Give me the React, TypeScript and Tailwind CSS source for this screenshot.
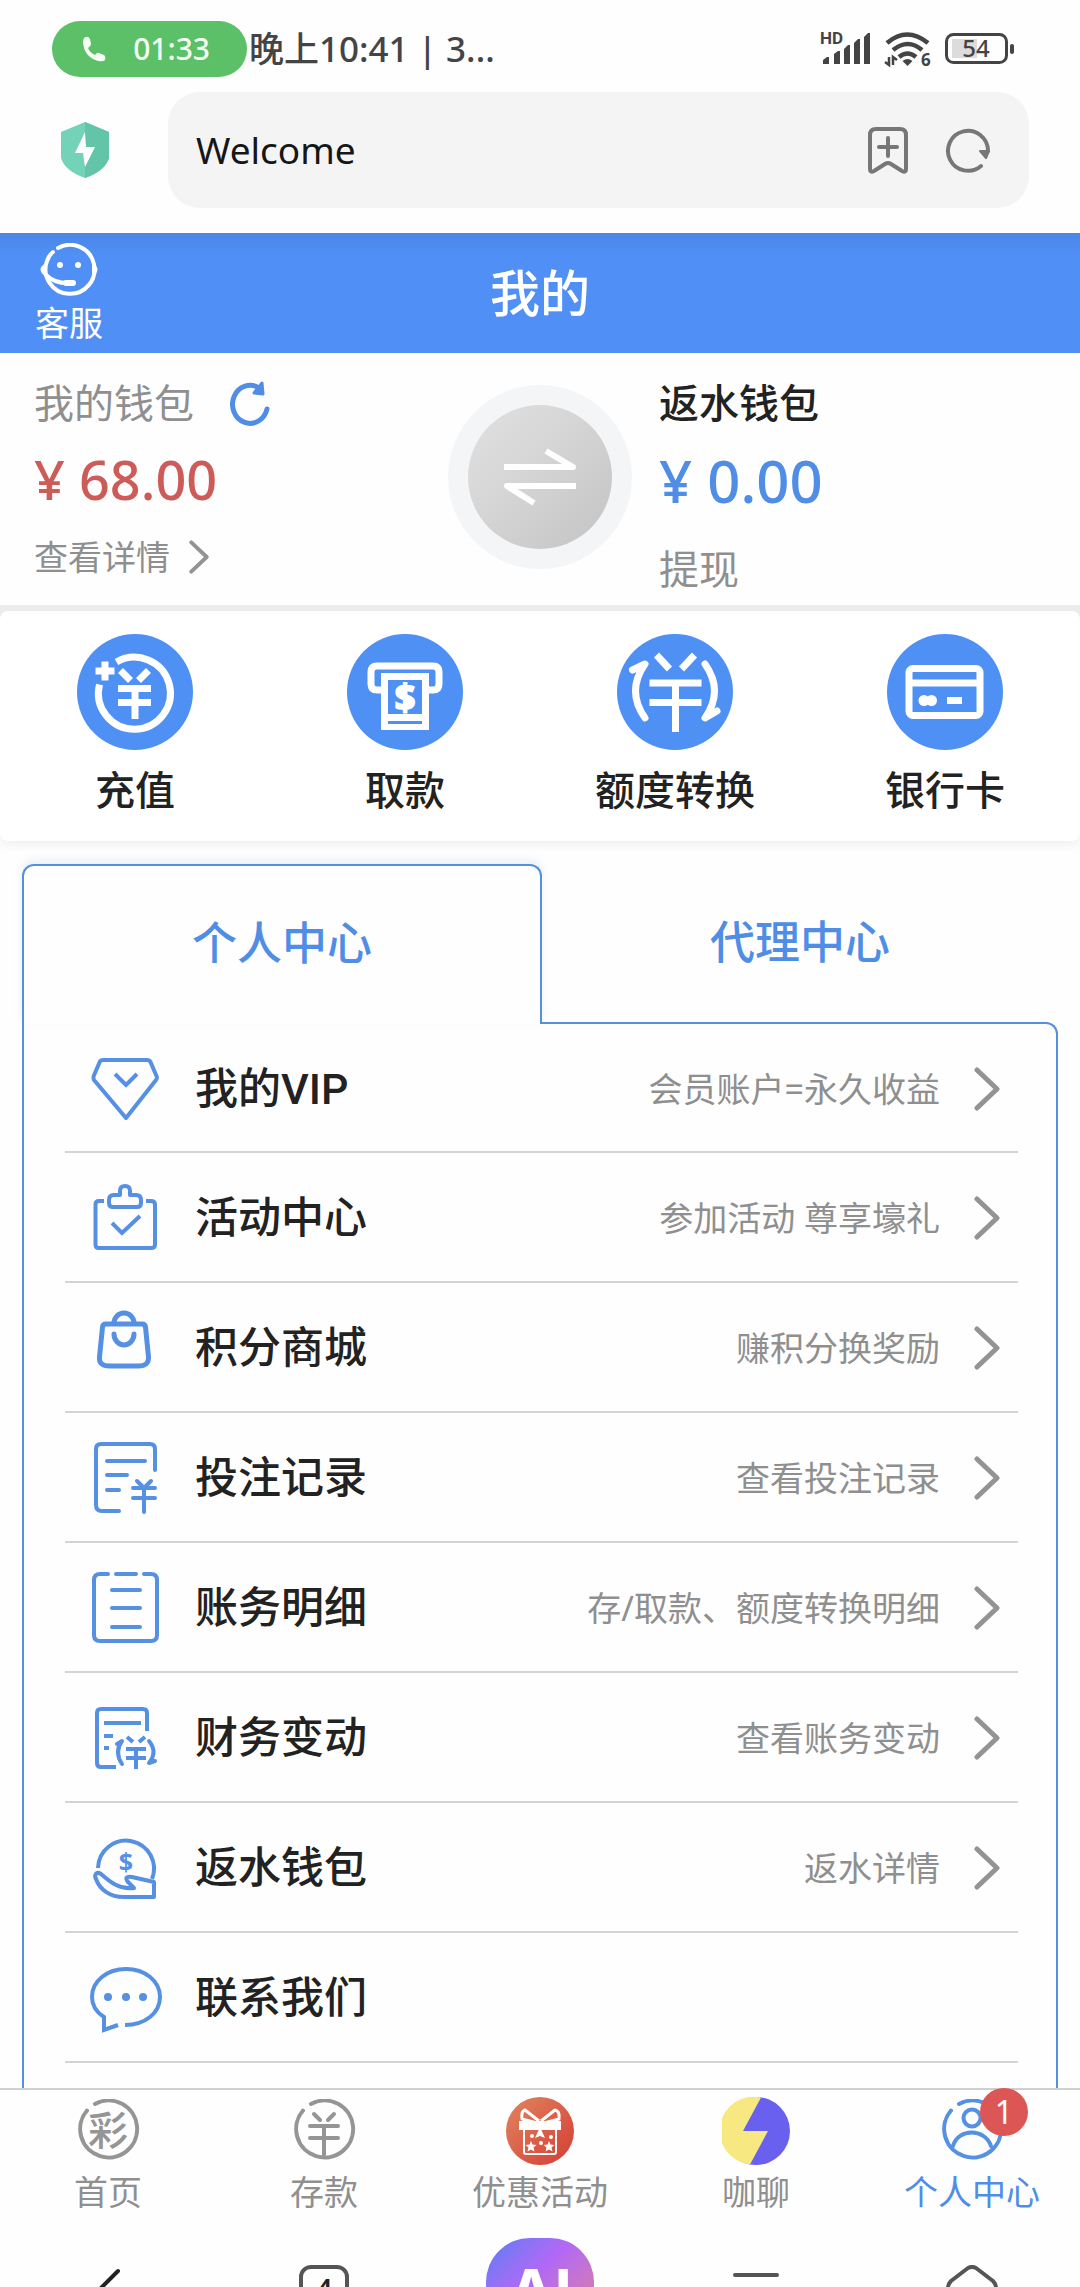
import { useState } from "react";
import type { ReactNode } from "react";

interface MenuItem {
  label: string;
  desc?: string;
  icon: ReactNode;
}

interface QuickAction {
  label: string;
  icon: ReactNode;
}

// 列表图标外框
const LineIcon = ({ children, width = 4 }: { children: ReactNode; width?: number }) => (
  <svg
    viewBox="0 0 76 76"
    className="size-[76px] shrink-0"
    fill="none"
    stroke="#5590e3"
    strokeWidth={width}
    strokeLinecap="round"
    strokeLinejoin="round"
    aria-hidden="true"
  >
    {children}
  </svg>
);

// 圆形快捷图标外框
const RoundIcon = ({ children }: { children: ReactNode }) => (
  <svg
    viewBox="0 0 116 116"
    className="size-[116px]"
    fill="none"
    stroke="#fff"
    strokeWidth="7"
    aria-hidden="true"
  >
    <circle cx="58" cy="58" r="58" fill="#4f90f4" stroke="none" />
    {children}
  </svg>
);

const Chevron = ({ className }: { className: string }) => (
  <svg
    viewBox="0 0 26 44"
    className={className}
    fill="none"
    stroke="#939393"
    strokeWidth="5"
    strokeLinecap="round"
    strokeLinejoin="round"
    aria-hidden="true"
  >
    <path d="M3 3l20 19L3 41" />
  </svg>
);

const quickActions: QuickAction[] = [
  {
    label: "充值",
    icon: (
      <RoundIcon>
        <path d="M39.5 28A36 36 0 1 1 22.5 50.5" />
        <path d="M18.5 37h19M28 27.5v19" />
        <path d="M43.5 36.5l10 10M71.5 36.5l-10 10M41 54.5h33M41 68.5h33M58 54.5V85" />
      </RoundIcon>
    ),
  },
  {
    label: "取款",
    icon: (
      <RoundIcon>
        <path d="M34 56h-4q-6 0-6-6V38q0-6 6-6h56q6 0 6 6v12q0 6-6 6h-4" />
        <path d="M34 39h48v57H34z" fill="#fff" stroke="none" />
        <path d="M41 46h34v34H41zM41 87h34v3H41z" fill="#4f90f4" stroke="none" />
        <text
          x="58"
          y="76"
          textAnchor="middle"
          fill="#fff"
          stroke="#fff"
          strokeWidth="2"
          className="font-['Noto_Sans',sans-serif] text-[36px] font-bold"
        >
          $
        </text>
      </RoundIcon>
    ),
  },
  {
    label: "额度转换",
    icon: (
      <RoundIcon>
        <path d="M28 84Q9 57 28 30L15.5 36" strokeLinecap="round" strokeLinejoin="round" />
        <path d="M88 30Q107 57 88 84L100 77" strokeLinecap="round" strokeLinejoin="round" />
        <path d="M39.5 21l13 14M77.5 21l-13 14M32.5 49h52M32.5 68.5h52M58.5 49v49" />
      </RoundIcon>
    ),
  },
  {
    label: "银行卡",
    icon: (
      <RoundIcon>
        <rect x="22" y="34.5" width="71" height="47" rx="4" />
        <path d="M22 49h71M60 66.5h15" />
        <circle cx="37" cy="66.5" r="5.5" fill="#fff" stroke="none" />
        <circle cx="44.5" cy="66.5" r="5.5" fill="#fff" stroke="none" />
      </RoundIcon>
    ),
  },
];

const menuItems: MenuItem[] = [
  {
    label: "我的VIP",
    desc: "会员账户=永久收益",
    icon: (
      <LineIcon>
        <path d="M18 9h42q2.5 0 3.5 2l6 14q1 2-.5 4L39 67 7 29q-1-2-.3-4l6-14q1-2 3.3-2z" />
        <path d="M28 23l11 11 11-11" strokeLinecap="butt" strokeLinejoin="miter" />
      </LineIcon>
    ),
  },
  {
    label: "活动中心",
    desc: "参加活动 尊享壕礼",
    icon: (
      <LineIcon>
        <path d="M17 21h-5q-3.5 0-3.5 3.5v40q0 3.5 3.5 3.5h52q4 0 4-3.5v-40q0-3.5-4-3.5h-5" strokeLinecap="butt" />
        <path d="M33 15v-4q0-5 5-5t5 5v4h6q5 0 5 5v3q0 4-4 4H26q-4 0-4-4v-3q0-5 5-5z" />
        <path d="M25 43l10 10 18-17" strokeLinecap="butt" strokeLinejoin="miter" />
      </LineIcon>
    ),
  },
  {
    label: "积分商城",
    desc: "赚积分换奖励",
    icon: (
      <LineIcon width={5}>
        <path d="M27 13a10 10 0 0 1 20 0" />
        <path d="M19 14h36q3 0 3.5 3l3 30q.5 9-10 9h-29q-11 0-10-9l3-30q.5-3 3.5-3z" />
        <path d="M27 24a10 11 0 0 0 20 0" />
      </LineIcon>
    ),
  },
  {
    label: "投注记录",
    desc: "查看投注记录",
    icon: (
      <LineIcon>
        <path d="M68 30V9q0-5-5-5H14Q9 4 9 9v56q0 6 6 6h17" />
        <path d="M20 21h38M20 35h20M20 50h12M50 41l7 7 7-7M46 48h22M46 58h22M57 48v24" />
      </LineIcon>
    ),
  },
  {
    label: "账务明细",
    desc: "存/取款、额度转换明细",
    icon: (
      <LineIcon>
        <path d="M21 4h-8Q7 4 7 10v55q0 6 6 6h51q6 0 6-6V10q0-6-6-6h-7M29 4h20" />
        <path d="M25 20h28M25 38h28M25 57h28" />
      </LineIcon>
    ),
  },
  {
    label: "财务变动",
    desc: "查看账务变动",
    icon: (
      <LineIcon>
        <path d="M60 31V13q0-4-4-4H14q-4 0-4 4v50q0 4 4 4h15" strokeLinecap="butt" />
        <path d="M17 23h37M17 36h9M17 48h5" strokeLinecap="butt" />
        <path d="M35 64q-8-12 0-23l-5 3M62 41q9 11 0 22l6-2" />
        <path d="M40 37l6 5M58 37l-6 5M39 49h20M39 58h20M49 49v20" strokeLinecap="butt" />
      </LineIcon>
    ),
  },
  {
    label: "返水钱包",
    desc: "返水详情",
    icon: (
      <LineIcon>
        <path d="M11 38A28 28 0 1 1 65 49" strokeLinecap="butt" />
        <path d="M14 44c-5-3-7 1-5 5 4 11 14 18 28 18h30V52l-22-5c-6-1-7 1-4 5l6 6c-14 2-24-6-33-14z" />
        <text
          x="39"
          y="41"
          textAnchor="middle"
          fill="#5590e3"
          stroke="none"
          className="font-['Noto_Sans',sans-serif] text-[25px] font-bold"
        >
          $
        </text>
      </LineIcon>
    ),
  },
  {
    label: "联系我们",
    icon: (
      <LineIcon>
        <path d="M38 65c20 0 35-12 35-28S58 9 39 9 5 21 5 37c0 8 4 15 12 20v13l14-5" strokeLinecap="butt" strokeLinejoin="miter" />
        <g fill="#5590e3" stroke="none">
          <circle cx="21" cy="37" r="4" />
          <circle cx="39" cy="37" r="4" />
          <circle cx="56" cy="37" r="4" />
        </g>
      </LineIcon>
    ),
  },
];

// 底部导航的灰色圆环
const NavRing = ({ children, color = "#959595" }: { children: ReactNode; color?: string }) => (
  <svg
    viewBox="0 0 64 64"
    className="size-16"
    fill="none"
    stroke={color}
    strokeWidth="4"
    strokeLinecap="round"
    aria-hidden="true"
  >
    <path d="M19 5A28.5 28.5 0 1 1 11 11.5" />
    {children}
  </svg>
);

const GiftIcon = () => (
  <svg viewBox="0 0 68 68" className="size-[68px]" fill="none" aria-hidden="true">
    <defs>
      <linearGradient id="gift" x1="0" y1="0" x2="1" y2="1">
        <stop offset="0" stopColor="#e08560" />
        <stop offset="1" stopColor="#d43d34" />
      </linearGradient>
    </defs>
    <circle cx="34" cy="34" r="34" fill="url(#gift)" />
    <path
      d="M33 24L19 13q-4 1-3 9l15 4M35 24l14-11q5 1 4 9l-15 4"
      stroke="#fff"
      strokeWidth="3"
      strokeLinejoin="round"
    />
    <path d="M13 24h42v9H13z" fill="#fff" />
    <path d="M18 33v22q0 2 2 2h28q2 0 2-2V33" stroke="#fff" strokeWidth="2" />
    <path d="M34 30l-5 11 5-2 5 2z" fill="#fff" />
    <path
      d="M25 44l1.500 3.500 4 .4-3 2.600 1 4-3.500-2-3.500 2 1-4-3-2.600 4-.4zM43 44l1.500 3.500 4 .4-3 2.600 1 4-3.500-2-3.500 2 1-4-3-2.600 4-.4z"
      fill="#fff"
    />
    <circle cx="26" cy="39" r="2" fill="#fff" />
    <circle cx="45" cy="40" r="2" fill="#fff" />
    <circle cx="35" cy="46" r="2" fill="#fff" />
  </svg>
);

const ChatIcon = () => (
  <svg viewBox="0 0 68 68" className="size-[68px]" aria-hidden="true">
    <circle cx="34" cy="34" r="34" fill="#6a60f0" />
    <path d="M39 0.500A34 34 0 1 0 28 67.500L46 34H21z" fill="#f8e882" />
  </svg>
);

const navItems = [
  {
    label: "首页",
    icon: (
      <NavRing>
        <text
          x="32"
          y="46"
          textAnchor="middle"
          fill="#959595"
          stroke="none"
          className="font-['Noto_Sans_CJK_SC',sans-serif] text-[40px] font-medium"
        >
          彩
        </text>
      </NavRing>
    ),
  },
  {
    label: "存款",
    icon: (
      <NavRing>
        <path d="M22 15l6 6M42 15l-6 6M18 27h28M18 39h28M32 28v28" />
      </NavRing>
    ),
  },
  { label: "优惠活动", icon: <GiftIcon /> },
  { label: "咖聊", icon: <ChatIcon /> },
  {
    label: "个人中心",
    badge: 1,
    icon: (
      <NavRing color="#5590e3">
        <circle cx="32" cy="19" r="8.500" />
        <path d="M13 47c5-18 32-18 38 0" />
      </NavRing>
    ),
  },
];

const StatusBar = () => (
  <div className="flex h-[92px] shrink-0 items-center pt-1.5 pr-[65px] pl-[52px] text-[#444]">
    <div className="flex h-14 w-[195px] items-center justify-between rounded-full bg-[#5bc068] pr-[37px] pl-[30px] text-[#f4fff4]">
      <svg viewBox="0 0 24 26" className="h-[26px] w-6" aria-hidden="true">
        <path
          d="M2 2q4-3 6 1l1 5q0 2-3 4 2 5 7 7 2-3 4-2l5 2q2 1 1 5-2 2-7 1Q2 21 1 6q0-2 1-4z"
          fill="currentColor"
        />
      </svg>
      <span className="text-[30px] leading-9 font-medium">01:33</span>
    </div>
    <span className="ml-0.5 text-[35px] leading-[44px] font-medium">晚上10:41 | 3...</span>
    <div className="ml-auto flex items-center gap-[13px]">
      <svg viewBox="0 0 50 34" className="h-[34px] w-[50px] overflow-visible" fill="currentColor" aria-hidden="true">
        <text x="-1" y="12" className="font-[Roboto,sans-serif] text-[17px] font-bold">
          HD
        </text>
        <path d="M2 32v-4l4-3h2v7zM13 32V22l4-3h2v13zM23 32V17l4-4h2v19zM33 32V11l4-4h2v25zM43 32V5l4-4h2v31z" />
      </svg>
      <svg viewBox="0 0 48 36" className="h-9 w-12 overflow-visible" fill="none" stroke="currentColor" aria-hidden="true">
        <path d="M3 12q20-17 41 0M9 19q15-12 29 0M15 26q8.500-7 17 0" strokeWidth="4.500" />
        <path d="M23.500 35l-5-5q5-4 10 0z" fill="currentColor" stroke="none" />
        <path d="M1 31l4 3v-8M9 34v-8l4 3" strokeWidth="2.500" />
        <text x="37" y="35" fill="currentColor" stroke="none" className="font-['Noto_Sans',sans-serif] text-[17px] font-bold">
          6
        </text>
      </svg>
      <svg viewBox="0 0 70 32" className="h-8 w-[70px]" fill="none" aria-hidden="true">
        <rect x="1.500" y="1.500" width="60" height="28" rx="7" stroke="currentColor" strokeWidth="3" />
        <path d="M7 6h25v19H7z" fill="#dcdcdc" />
        <rect x="65" y="11" width="4" height="10" rx="2" fill="currentColor" />
        <text
          x="31"
          y="24"
          textAnchor="middle"
          fill="currentColor"
          className="font-['Noto_Sans',sans-serif] text-[24px] font-medium"
        >
          54
        </text>
      </svg>
    </div>
  </div>
);

const AddressBar = () => (
  <div className="mb-[25px] flex shrink-0 items-center pr-[51px] pl-[60px]">
    <svg viewBox="0 0 50 58" className="h-[58px] w-[50px] shrink-0" aria-hidden="true">
      <path d="M25 1L1 11v26q4 13 24 20 20-7 24-20V11z" fill="#74d2b9" />
      <path d="M25 1v56q20-7 24-20V11z" fill="#62c5a8" />
      <path d="M25 11L15 32h8l2 14 10-20h-9z" fill="#fff" />
    </svg>
    <div className="ml-[58px] flex h-[116px] min-w-0 flex-1 items-center rounded-[32px] bg-[#f4f4f4] pr-[38px] pl-[28px]">
      <input
        aria-label="地址栏"
        defaultValue="Welcome"
        className="min-w-0 flex-1 bg-transparent text-[37px] text-[#161616] outline-none"
      />
      <button type="button" aria-label="添加书签">
        <svg
          viewBox="0 0 42 48"
          className="h-12 w-[42px]"
          fill="none"
          stroke="#777"
          strokeWidth="4"
          strokeLinecap="round"
          strokeLinejoin="round"
          aria-hidden="true"
        >
          <path d="M9 3h24q6 0 6 6v34q0 4-4 2l-11-7q-3-2-6 0L7 45q-4 2-4-2V9q0-6 6-6zM21 12v18M12 21h18" />
        </svg>
      </button>
      <button type="button" aria-label="刷新页面" className="ml-[36px]">
        <svg viewBox="0 0 46 46" className="size-[46px]" fill="none" stroke="#777" strokeWidth="4" strokeLinecap="round" aria-hidden="true">
          <path d="M36 39A20 20 0 1 1 43 24" />
          <path d="M35 24h9l-3 7z" fill="#777" strokeWidth="2" strokeLinejoin="round" />
        </svg>
      </button>
    </div>
  </div>
);

const PageHeader = () => (
  <header className="grid h-[120px] shrink-0 grid-cols-[1fr_auto_1fr] items-center bg-linear-to-b from-[#4a86e6] to-[#5090f6] to-20% px-[35px] text-white">
    <button type="button" className="flex w-[68px] flex-col items-center">
      <svg viewBox="0 0 60 54" className="h-[54px] w-[60px]" fill="none" stroke="#fff" strokeWidth="4" strokeLinecap="round" aria-hidden="true">
        <path d="M19 5A24.500 24.500 0 1 1 8 18Q10 12 14 9" />
        <path d="M7 32q9 9 25 8" strokeWidth="4" />
        <path d="M27 40h7" strokeWidth="6" />
        <path d="M7 20q-11 6 0 14zM53 20q11 6 0 14z" fill="#fff" stroke="none" />
        <circle cx="21" cy="22" r="3" fill="#fff" stroke="none" />
        <circle cx="39" cy="22" r="3" fill="#fff" stroke="none" />
      </svg>
      <span className="mt-1.5 text-[34px] leading-10">客服</span>
    </button>
    <h1 className="text-[50px] leading-[60px] font-medium">我的</h1>
  </header>
);

const Wallets = () => (
  <section className="grid h-[252px] shrink-0 grid-cols-[1fr_auto_1fr] items-start pt-[26px] text-[#8f8f8f]">
    <div className="flex flex-col items-start pl-[34px]">
      <div className="flex h-12 items-center gap-[36px]">
        <span className="text-[40px] leading-[48px]">我的钱包</span>
        <button type="button" aria-label="刷新余额">
          <svg viewBox="0 0 42 48" className="h-12 w-[42px]" fill="none" stroke="#4f8de6" strokeWidth="5" strokeLinecap="round" aria-hidden="true">
            <path d="M37 30A17.500 19 0 1 1 29 9" />
            <path d="M32 4l1 11-9-1z" fill="#4f8de6" strokeWidth="3" strokeLinejoin="round" />
          </svg>
        </button>
      </div>
      <p className="mt-5 text-[54px] leading-[64px] font-medium text-[#cd5c59]">¥ 68.00</p>
      <a href="#detail" className="mt-[22px] flex h-12 items-center gap-[18px] text-[34px] leading-[48px]">
        查看详情
        <Chevron className="h-[34px] w-[22px]" />
      </a>
    </div>
    <button
      type="button"
      aria-label="钱包互转"
      className="mt-1.5 flex size-[184px] items-center justify-center rounded-full bg-[#f4f5f7]"
    >
      <span className="flex size-[144px] items-center justify-center rounded-full bg-linear-to-br from-[#e2e2e2] to-[#c4c4c4]">
        <svg viewBox="0 0 72 60" className="h-[60px] w-[72px]" fill="none" stroke="#fff" strokeWidth="6" strokeLinejoin="round" aria-hidden="true">
          <path d="M0 20h69L42 4M72 39H3l27 17" />
        </svg>
      </span>
    </button>
    <div className="flex flex-col items-start pl-[27px]">
      <span className="text-[40px] leading-[48px] font-medium text-[#222]">返水钱包</span>
      <p className="mt-[22px] text-[58px] leading-[64px] font-medium text-[#4f8de6]">¥ 0.00</p>
      <a href="#withdraw" className="mt-8 text-[40px] leading-[48px]">
        提现
      </a>
    </div>
  </section>
);

export default function App() {
  const [tab, setTab] = useState(0);

  const tabClass = (active: boolean) =>
    active
      ? "h-[160px] flex-1 rounded-t-xl border-x-2 border-t-2 border-[#5590dc] bg-[#fefefe] pb-1 shadow-[0_-4px_8px_rgba(80,120,200,0.12)]"
      : "h-[160px] flex-1 pb-1";

  return (
    <div className="flex h-screen flex-col overflow-hidden bg-[#fefefe] font-['Noto_Sans','Noto_Sans_CJK_SC',sans-serif]">
      <StatusBar />
      <AddressBar />
      <PageHeader />
      <main className="flex min-h-0 flex-1 flex-col overflow-hidden">
        <Wallets />

        {/* 快捷操作 */}
        <section className="shrink-0 border-t-[6px] border-[#ececec] bg-linear-to-b from-[#ececec] from-50% to-[#fefefe] to-50%">
          <div className="grid grid-cols-4 rounded-lg bg-white pt-[23px] pb-[27px] shadow-[0_5px_8px_rgba(0,0,0,0.05)]">
            {quickActions.map((action) => (
              <button key={action.label} type="button" className="flex flex-col items-center gap-4">
                {action.icon}
                <span className="text-[40px] leading-[48px] font-medium text-[#222]">{action.label}</span>
              </button>
            ))}
          </div>
        </section>

        {/* 个人 / 代理 */}
        <section className="mx-[22px] mt-[23px] flex min-h-0 flex-1 flex-col">
          <div role="tablist" className="relative z-10 -mb-0.5 flex shrink-0 text-[45px] font-medium text-[#4f8de6]">
            {["个人中心", "代理中心"].map((name, i) => (
              <button
                key={name}
                type="button"
                role="tab"
                aria-selected={tab === i}
                onClick={() => setTab(i)}
                className={tabClass(tab === i)}
              >
                {name}
              </button>
            ))}
          </div>
          <ul className="min-h-0 flex-1 overflow-hidden rounded-tr-xl border-x-2 border-t-2 border-[#5590dc] pr-[38px] pl-[41px]">
            {menuItems.map((item) => (
              <li key={item.label} className="h-[130px] border-b-2 border-[#d4d4d4] first:h-[129px]">
                <a href="#menu" className="flex h-full items-center pt-0.5 pr-[18px] pl-[22px]">
                  {item.icon}
                  <span className="ml-[32px] font-[Roboto,'Noto_Sans_CJK_SC',sans-serif] text-[43px] leading-[52px] font-medium text-[#222]">
                    {item.label}
                  </span>
                  {item.desc && (
                    <>
                      <span className="ml-auto text-[34px] leading-10 text-[#8f8f8f]">{item.desc}</span>
                      <Chevron className="ml-[34px] h-[44px] w-[26px]" />
                    </>
                  )}
                </a>
              </li>
            ))}
          </ul>
        </section>
      </main>

      {/* 底部导航 */}
      <nav className="grid h-[145px] shrink-0 grid-cols-5 border-t-2 border-[#cfcfcf] text-[34px] leading-10 text-[#8f8f8f]">
        {navItems.map((item) => (
          <a key={item.label} href="#nav" className={item.badge ? "flex flex-col items-center text-[#4f8de6]" : "flex flex-col items-center"}>
            <span className="relative flex h-[80px] items-center pt-0.5">
              {item.icon}
              {item.badge && (
                <span className="absolute -top-0.5 -right-6 flex size-12 items-center justify-center rounded-full bg-[#dc5656] text-[32px] text-white">
                  {item.badge}
                </span>
              )}
            </span>
            <span className="mt-0.5">{item.label}</span>
          </a>
        ))}
      </nav>

      {/* 浏览器工具栏 */}
      <div className="grid h-[54px] shrink-0 grid-cols-5 justify-items-center overflow-hidden">
        <button type="button" aria-label="后退" className="mt-[34px] h-12">
          <svg viewBox="0 0 28 48" className="h-12 w-7" fill="none" stroke="#222" strokeWidth="4" strokeLinecap="round" aria-hidden="true">
            <path d="M24 4L3 25l21 20" />
          </svg>
        </button>
        <button
          type="button"
          aria-label="标签页"
          className="mt-[32px] flex size-[50px] items-center justify-center rounded-xl border-4 border-[#555] text-[32px] font-medium text-[#222]"
        >
          4
        </button>
        <button
          type="button"
          aria-label="AI 助手"
          className="mt-[5px] h-[108px] w-[108px] rounded-[44px] bg-linear-to-br from-[#4f7cf5] via-[#b168f5] via-40% to-[#ee7a80] font-[Inter,sans-serif] text-[62px] leading-[108px] font-bold text-white"
        >
          AI
        </button>
        <button type="button" aria-label="菜单" className="mt-[38px] h-10">
          <svg viewBox="0 0 46 40" className="h-10 w-[46px]" stroke="#555" strokeWidth="4" strokeLinecap="round" aria-hidden="true">
            <path d="M2 4h42M2 20h42M2 38h42" />
          </svg>
        </button>
        <button type="button" aria-label="主页" className="mt-[32px] h-[50px]">
          <svg viewBox="0 0 52 50" className="h-[50px] w-[52px]" fill="none" stroke="#555" strokeWidth="4" strokeLinejoin="round" aria-hidden="true">
            <path d="M22 3q4-2 8 0l17 13q3 3 3 7v24H2V23q0-4 3-7z" />
          </svg>
        </button>
      </div>
    </div>
  );
}
